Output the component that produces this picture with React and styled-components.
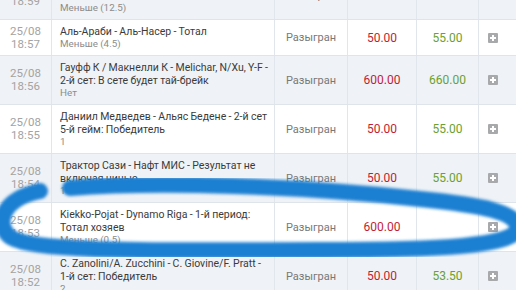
import React from 'react';
import styled, { createGlobalStyle } from 'styled-components';

const GlobalStyle = createGlobalStyle`
  html, body {
    margin: 0;
    padding: 0;
    background: #ffffff;
  }
  body {
    font-family: Roboto, "Liberation Sans", sans-serif;
    overflow: hidden;
  }
`;

const Screen = styled.div`
  position: relative;
  width: 516px;
  height: 290px;
  overflow: hidden;
`;

const Table = styled.div`
  margin-top: -29px;
  display: flex;
  flex-direction: column;
`;

const Row = styled.div`
  display: grid;
  grid-template-columns: 52px 223px 73px 69px 62px 37px;
  background: ${p => (p.$odd ? '#eff2f6' : '#ffffff')};
  border-bottom: 1px solid #dfe4ea;
`;

const Cell = styled.div`
  border-right: 1px solid #e1e6ec;
  display: flex;
  align-items: center;
  justify-content: ${p => p.$align || 'center'};
  &:last-child {
    border-right: none;
  }
`;

const DateCell = styled(Cell)`
  flex-direction: column;
  font-size: 11.5px;
  line-height: 13px;
  color: #a3a3a3;
  letter-spacing: 0.1px;
`;

const EventCell = styled.div`
  border-right: 1px solid #e1e6ec;
  padding: 5px 0 5px 8px;
  min-width: 0;
`;

const Title = styled.div`
  font-size: 10.5px;
  line-height: 13px;
  color: #3b3b3b;
  white-space: nowrap;
  word-spacing: -0.3px;
`;

const Pick = styled.div`
  font-size: 9.8px;
  line-height: 12px;
  color: #8c8c8c;
  white-space: nowrap;
`;

const Status = styled(Cell)`
  font-size: 11px;
  color: #787878;
`;

const Money = styled(Cell)`
  font-size: 12px;
  color: ${p => (p.$win ? '#6aa12e' : '#c21d33')};
`;

const IconCell = styled(Cell)`
  justify-content: flex-start;
  padding-left: 9px;
`;

const PlusBox = styled.span`
  position: relative;
  width: 10px;
  height: 10px;
  border-radius: 1px;
  background: #a8a9ab;
  &::before,
  &::after {
    content: '';
    position: absolute;
    background: #ffffff;
  }
  &::before {
    left: 2px;
    top: 4px;
    width: 6px;
    height: 2px;
  }
  &::after {
    left: 4px;
    top: 2px;
    width: 2px;
    height: 6px;
  }
`;

const Scribble = styled.svg`
  position: absolute;
  left: 0;
  top: 0;
  pointer-events: none;
`;

const bets = [
  { date: '25/08', time: '18:59', title: ['Аль-Ахли - Аль-Вахда - Тотал', 'хозяев'], pick: 'Меньше (12.5)', stake: '50.00', win: '55.00' },
  { date: '25/08', time: '18:57', title: ['Аль-Араби - Аль-Насер - Тотал'], pick: 'Меньше (4.5)', stake: '50.00', win: '55.00' },
  { date: '25/08', time: '18:56', title: ['Гауфф К / Макнелли К - Melichar, N/Xu, Y-F -', '2-й сет: В сете будет тай-брейк'], pick: 'Нет', stake: '600.00', win: '660.00' },
  { date: '25/08', time: '18:55', title: ['Даниил Медведев - Альяс Бедене - 2-й сет', '5-й гейм: Победитель'], pick: '1', stake: '50.00', win: '55.00' },
  { date: '25/08', time: '18:54', title: ['Трактор Сази - Нафт МИС - Результат не', 'включая ничью'], pick: '1', stake: '50.00', win: '55.00' },
  { date: '25/08', time: '18:53', title: ['Kiekko-Pojat - Dynamo Riga - 1-й период:', 'Тотал хозяев'], pick: 'Меньше (0.5)', stake: '600.00', win: '' },
  { date: '25/08', time: '18:52', title: ['C. Zanolini/A. Zucchini - C. Giovine/F. Pratt -', '1-й сет: Победитель'], pick: '2', stake: '50.00', win: '53.50' },
];

const BetRow = ({ bet, odd }) => (
  <Row $odd={odd}>
    <DateCell>
      <span>{bet.date}</span>
      <span>{bet.time}</span>
    </DateCell>
    <EventCell>
      {bet.title.map(line => (
        <Title key={line}>{line}</Title>
      ))}
      <Pick>{bet.pick}</Pick>
    </EventCell>
    <Status>Разыгран</Status>
    <Money>{bet.stake}</Money>
    <Money $win>{bet.win}</Money>
    <IconCell>
      <PlusBox />
    </IconCell>
  </Row>
);

export default function App() {
  return (
    <>
      <GlobalStyle />
      <Screen>
        <Table>
          {bets.map((bet, i) => (
            <BetRow key={bet.time} bet={bet} odd={i % 2 === 0} />
          ))}
        </Table>
        {/* hand-drawn marker loop around the highlighted bet */}
        <Scribble width="516" height="290" viewBox="0 0 516 290">
          <defs>
            <filter id="soft" x="-10%" y="-10%" width="120%" height="120%">
              <feGaussianBlur stdDeviation="1.6" />
            </filter>
          </defs>
          <path
            d="M 70 188 C 160 181, 300 186, 420 199 C 480 205, 520 212, 517 229 C 514 246, 440 250, 320 250 C 180 250, 30 254, 9 236 C -5 222, 3 199, 40 191"
            fill="none"
            stroke="#1f80d2"
            strokeWidth="16"
            strokeLinecap="round"
            filter="url(#soft)"
          />
        </Scribble>
      </Screen>
    </>
  );
}
